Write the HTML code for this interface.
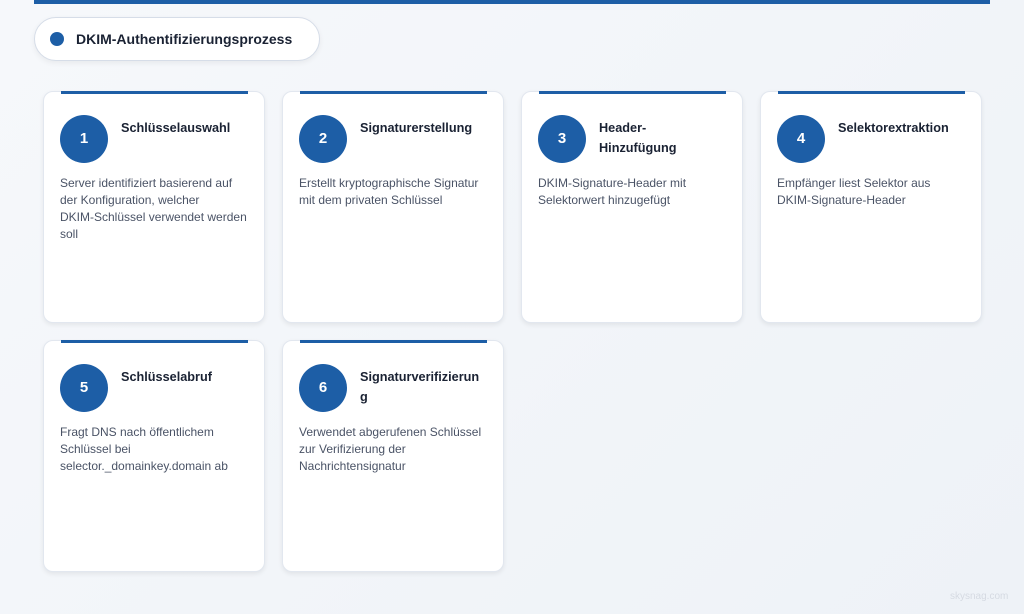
<!DOCTYPE html>
<html><head><meta charset="utf-8"><style>
*{margin:0;padding:0;box-sizing:border-box}
body{width:1024px;height:614px;overflow:hidden;background:linear-gradient(135deg,#f6f8fb,#eef2f7);font-family:"Liberation Sans","DejaVu Sans",sans-serif;position:relative}
.top{position:absolute;left:34px;top:0;width:956px;height:4px;background:#1d5ea6}
.pill{position:absolute;left:34px;top:17px;width:286px;height:44px;border-radius:22px;background:#fff;border:1px solid #d6dde8;box-shadow:0 2px 6px rgba(0,0,0,.06)}
.pill .dot{position:absolute;left:15px;top:14px;width:14px;height:14px;border-radius:50%;background:#1d5ea6}
.pill span{position:absolute;left:41px;top:13px;font-size:14px;font-weight:bold;color:#1a2233}
.card{position:absolute;width:222px;height:232px;background:#fff;border-radius:10px;border:1px solid #e2e7ef;box-shadow:0 2px 5px rgba(0,0,0,.07)}
.card .bar{position:absolute;left:17px;top:-1px;width:187px;height:3px;background:#1d5ea6}
.card .num{position:absolute;left:16px;top:23px;width:48px;height:48px;border-radius:50%;background:#1d5ea6;color:#fff;font-weight:bold;font-size:15px;text-align:center;line-height:48px}
.card h3{position:absolute;left:77px;top:26px;width:130px;font-size:12.7px;font-weight:bold;color:#1a2233;line-height:20px;white-space:nowrap}
.card p{position:absolute;left:16px;top:83px;width:200px;font-size:12px;color:#4a5366;line-height:17px;white-space:nowrap}
.wm{position:absolute;left:950px;top:591px;font-size:10px;color:#d5dae2}
</style></head><body>
<div class="top"></div>
<div class="pill"><div class="dot"></div><span>DKIM-Authentifizierungsprozess</span></div>
<div class="card" style="left:43px;top:91px"><div class="bar"></div><div class="num">1</div><h3>Schlüsselauswahl</h3><p>Server identifiziert basierend auf<br>der Konfiguration, welcher<br>DKIM-Schlüssel verwendet werden<br>soll</p></div>
<div class="card" style="left:282px;top:91px"><div class="bar"></div><div class="num">2</div><h3>Signaturerstellung</h3><p>Erstellt kryptographische Signatur<br>mit dem privaten Schlüssel</p></div>
<div class="card" style="left:521px;top:91px"><div class="bar"></div><div class="num">3</div><h3>Header-<br>Hinzufügung</h3><p>DKIM-Signature-Header mit<br>Selektorwert hinzugefügt</p></div>
<div class="card" style="left:760px;top:91px"><div class="bar"></div><div class="num">4</div><h3>Selektorextraktion</h3><p>Empfänger liest Selektor aus<br>DKIM-Signature-Header</p></div>
<div class="card" style="left:43px;top:340px"><div class="bar"></div><div class="num">5</div><h3>Schlüsselabruf</h3><p>Fragt DNS nach öffentlichem<br>Schlüssel bei<br>selector._domainkey.domain ab</p></div>
<div class="card" style="left:282px;top:340px"><div class="bar"></div><div class="num">6</div><h3>Signaturverifizierun<br>g</h3><p>Verwendet abgerufenen Schlüssel<br>zur Verifizierung der<br>Nachrichtensignatur</p></div>
<div class="wm">skysnag.com</div>
</body></html>
